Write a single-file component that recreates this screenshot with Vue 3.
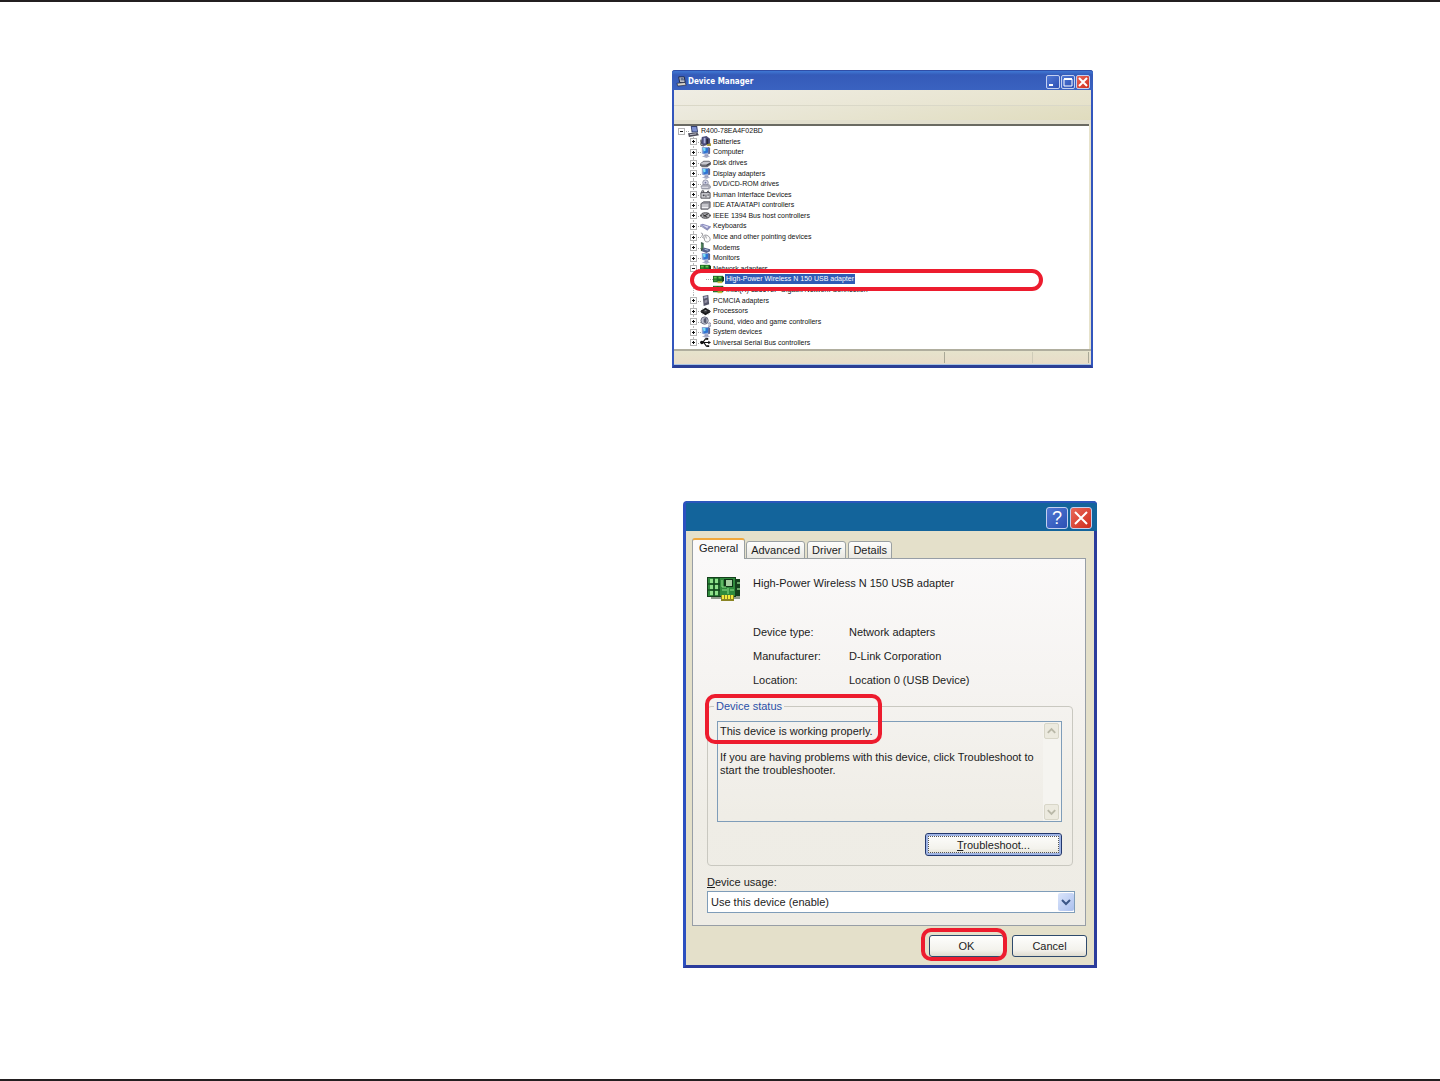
<template>
  <svg class="sprite" aria-hidden="true">
    <symbol id="icon-pc" viewBox="0 0 12 12">
      <path d="M3 0h7l1 7H4z" fill="#34406e" />
      <path d="M4 1h5l1 5H5z" fill="#7d8fd0" />
      <path d="M0 8l10-1 2 3-11 2z" fill="#4a4a58" />
      <path d="M2 9.500l7-1" stroke="#c9cbd8" />
    </symbol>
    <symbol id="icon-battery" viewBox="0 0 12 12">
      <path d="M2 1l5-1 4 3v6l-7 2-3-3z" fill="#4b4c78" />
      <path d="M4 2h2v6H4z" fill="#a9aede" />
      <path d="M7 3h2v6H7z" fill="#252438" />
      <path d="M7 9l5-1v3H8z" fill="#a79a3c" />
      <path d="M1 4v6l3 1" stroke="#333" fill="none" />
    </symbol>
    <symbol id="icon-monitor" viewBox="0 0 12 12">
      <path d="M2 0h8l1 7-7 1-2-1z" fill="#8fa6d6" />
      <path d="M3 1h6v5l-5 1z" fill="#2f74d4" />
      <path d="M3 1h3v3l-2 1z" fill="#7ce0f4" />
      <path d="M9 0l2 1v6l-2 1z" fill="#59618f" />
      <path d="M5 8h4v2H5z" fill="#8188b0" />
      <path d="M2 10l5-1 4 1-4 2z" fill="#a9aec8" />
    </symbol>
    <symbol id="icon-disk" viewBox="0 0 12 12">
      <path d="M0 6l4-3h6l2 2v2L8 10H2L0 8z" fill="#6c6c74" />
      <path d="M1 6l3-2h6l1 1-4 2H2z" fill="#c9c9d0" />
      <path d="M7 8l4-2" stroke="#34343a" />
    </symbol>
    <symbol id="icon-dvd" viewBox="0 0 12 12">
      <circle cx="6" cy="4" r="3" fill="#d6d8e6" stroke="#8d8fa4" />
      <circle cx="6" cy="4" r="1" fill="#7577a0" />
      <path d="M1 8l2-2h7l2 3-2 2H2z" fill="#a6a7b4" stroke="#77788a" stroke-width=".5" />
      <path d="M2 9h7" stroke="#efeff4" />
    </symbol>
    <symbol id="icon-hid" viewBox="0 0 12 12">
      <path d="M1 4h10v6H1z" fill="#d8d8dc" stroke="#44444c" />
      <path d="M2 4V2h2v2M7 4l2-2 1 2" stroke="#44444c" fill="none" />
      <path d="M3 6h2v2H3zM6 6h1v3H6zM8 6h2v1H8z" fill="#44444c" />
    </symbol>
    <symbol id="icon-ide" viewBox="0 0 12 12">
      <path d="M1 4l3-2h7v6l-2 2H1z" fill="#9a9aa2" stroke="#55555d" />
      <path d="M2 5h7v1H2zM2 7h7v2H2z" fill="#f0f0f3" />
    </symbol>
    <symbol id="icon-firewire" viewBox="0 0 12 12">
      <ellipse cx="6" cy="6" rx="5" ry="3" fill="#a9a9ad" stroke="#404044" />
      <path d="M3 5l5 3M4 7l5-3" stroke="#222" />
      <path d="M0 6h2M10 6h2" stroke="#555" />
    </symbol>
    <symbol id="icon-keyboard" viewBox="0 0 12 12">
      <path d="M0 4l3-1 9 3-4 4z" fill="#8d8fc0" />
      <path d="M2 4l7 2-1 2z" fill="#dcddf2" />
      <path d="M0 5l8 5 4-4" stroke="#6b6d98" stroke-width=".7" fill="none" />
    </symbol>
    <symbol id="icon-mouse" viewBox="0 0 12 12">
      <path d="M4 4c3-2 7 1 7 4s-5 4-6 1z" fill="#fbfbfb" stroke="#77777e" stroke-width=".8" />
      <path d="M1 1l2 1-1 3 2 2M6 4l1 3" stroke="#77777e" fill="none" stroke-width=".8" />
    </symbol>
    <symbol id="icon-modem" viewBox="0 0 12 12">
      <path d="M1 0l3 1v8l-3 1z" fill="#3c5c4c" />
      <path d="M4 6l7 2v2l-4 2-5-2z" fill="#55608a" />
      <path d="M5 8l4 1" stroke="#b4c8e4" />
      <path d="M2 2v5" stroke="#62a868" />
    </symbol>
    <symbol id="icon-card" viewBox="0 0 12 12">
      <path d="M0 2h11v7H0z" fill="#1d6a26" />
      <path d="M1 3h3v2H1zM6 3h3v2H6z" fill="#62c44c" />
      <path d="M1 6h3v2H1z" fill="#3c9638" />
      <path d="M10 3h2v5h-2z" fill="#17391b" />
      <path d="M5 8h5v2H5z" fill="#c7bd3c" />
    </symbol>
    <symbol id="icon-pcmcia" viewBox="0 0 12 12">
      <path d="M3 1l6-1 1 10-6 2z" fill="#55556a" />
      <path d="M4 2l4-1v2L4 4z" fill="#b0b0cc" />
      <path d="M5 6l3-1v3l-3 1z" fill="#9390a2" />
    </symbol>
    <symbol id="icon-cpu" viewBox="0 0 12 12">
      <path d="M1 5l5-3 5 3v2l-5 3-5-3z" fill="#18181a" />
      <path d="M4 5l2-1 2 1-2 2z" fill="#8c8c90" />
      <path d="M0 6h12M3 3l6 6M9 3L3 9" stroke="#3a3a3c" stroke-width=".7" />
    </symbol>
    <symbol id="icon-sound" viewBox="0 0 12 12">
      <circle cx="5" cy="5" r="4" fill="#bfc1cf" stroke="#66687c" />
      <path d="M4 3l3-1v6L4 7z" fill="#55586e" />
      <path d="M9 8a2 2 0 1 1 0 3" fill="#c9cadb" stroke="#7b7d94" />
    </symbol>
    <symbol id="icon-usb" viewBox="0 0 12 12">
      <path d="M1 6h9M3 6l3-4h2M4 6l3 4h2" stroke="#111" stroke-width="1.3" fill="none" />
      <circle cx="2" cy="6" r="2" fill="#111" />
      <path d="M9 4l3 2-3 2zM7 1h2v2H7zM8 9h2v2H8z" fill="#111" />
    </symbol>
  </svg>

  <main class="page">
    <section class="manager">
      <header class="manager-title">
        <svg class="title-icon" viewBox="0 0 12 12">
          <path d="M3 1h6l1 6H4z" fill="#c8cbd2" stroke="#1c2442" />
          <path d="M5 2h3l1 3H5z" fill="#62708c" />
          <path d="M1 8l9-1 1 3-9 1z" fill="#d8d4c8" stroke="#1c2442" stroke-width=".7" />
        </svg>
        <h1>Device Manager</h1>
        <button class="caption" aria-label="Minimize">
          <svg viewBox="0 0 12 12"><path d="M2 9h4" stroke="#fff" stroke-width="2" /></svg>
        </button>
        <button class="caption" aria-label="Maximize">
          <svg viewBox="0 0 12 12">
            <path d="M2 3h8v7H2z" stroke="#fff" fill="none" />
            <path d="M2 3h8" stroke="#fff" stroke-width="2" />
          </svg>
        </button>
        <button class="caption close" aria-label="Close">
          <svg viewBox="0 0 12 12"><path d="M2 2l8 8M10 2l-8 8" stroke="#fff" stroke-width="2" /></svg>
        </button>
      </header>
      <div class="menu-band"></div>
      <div class="tool-band"></div>
      <ul class="tree">
        <li v-for="item in devices" :key="item.name" :class="'level-' + item.level">
          <button v-if="item.level < 2" class="toggle" :class="{ open: item.open }" :aria-label="item.name"></button>
          <svg class="device-icon"><use :href="'#icon-' + item.icon" /></svg>
          <span class="label" :class="{ selected: item.selected }">{{ item.name }}</span>
          <span v-if="item.selected" class="ring ring-row"></span>
        </li>
      </ul>
      <footer class="status-bar"><span></span><span></span><span></span></footer>
    </section>

    <section class="dialog">
      <header class="dialog-title">
        <button class="caption big" aria-label="Help">?</button>
        <button class="caption big close" aria-label="Close">
          <svg viewBox="0 0 20 20"><path d="M4 4l12 12M16 4L4 16" stroke="#fff" stroke-width="2" /></svg>
        </button>
      </header>
      <div class="dialog-body">
        <nav class="tabs">
          <button
            v-for="tab in tabs"
            :key="tab"
            :class="{ active: tab === activeTab }"
            @click="activeTab = tab"
          >{{ tab }}</button>
        </nav>
        <div class="panel">
          <div class="device-head">
            <svg class="card-icon" viewBox="0 0 34 26">
              <path d="M4 5h29v19H4z" fill="#8f9a8c" />
              <path d="M0 2h29v20H0z" fill="#14401c" />
              <path d="M1 3h27v18H1z" fill="#2f8a3c" />
              <path d="M3 4h3v4H3zM8 4h3v4H8zM3 10h3v4H3zM8 10h3v4H8zM3 16h3v4H3zM8 16h3v4H8z" fill="#8ee08a" />
              <path d="M7 3v18M12 3v18M1 9h12M1 15h12" stroke="#0e3416" />
              <path d="M17 4h9v8h-9z" fill="#0e3416" />
              <path d="M19 5h6v6h-6z" fill="#a4cfa0" />
              <path d="M15 5v7h4M15 15h5M23 15h4M21 13v6" stroke="#8ee08a" fill="none" />
              <path d="M29 4h4v17h-4z" fill="#14401c" />
              <path d="M30 7h3v2h-3zM30 13h3v2h-3z" fill="#6aa868" />
              <path d="M14 20h13v6H14z" fill="#8a8424" />
              <path d="M16 20v4M19 20v4M22 20v4M25 20v4" stroke="#f2ea3c" stroke-width="2" />
            </svg>
            <span>High-Power Wireless N 150 USB adapter</span>
          </div>
          <dl class="facts">
            <template v-for="fact in facts" :key="fact.label">
              <dt>{{ fact.label }}</dt>
              <dd>{{ fact.value }}</dd>
            </template>
          </dl>
          <div class="status-group">
            <fieldset>
              <legend><label for="status">Device status</label></legend>
              <div class="status-box">
                <textarea id="status" readonly :value="statusText"></textarea>
                <div class="scroll">
                  <button disabled aria-label="Scroll up">
                    <svg viewBox="0 0 14 14"><path d="M3 9l4-4 4 4" stroke="#b9b8a8" stroke-width="2" fill="none" /></svg>
                  </button>
                  <button disabled aria-label="Scroll down">
                    <svg viewBox="0 0 14 14"><path d="M3 5l4 4 4-4" stroke="#b9b8a8" stroke-width="2" fill="none" /></svg>
                  </button>
                </div>
              </div>
              <button class="push focused"><u>T</u>roubleshoot...</button>
            </fieldset>
            <span class="ring ring-status"></span>
          </div>
          <label class="usage-label" for="usage"><u>D</u>evice usage:</label>
          <div class="usage">
            <select id="usage">
              <option>Use this device (enable)</option>
            </select>
            <svg class="drop" viewBox="0 0 16 18">
              <path d="M4 7l4 4 4-4" stroke="#3b5686" stroke-width="2" fill="none" />
            </svg>
          </div>
        </div>
        <footer class="actions">
          <span class="marked">
            <button class="push">OK</button>
            <span class="ring ring-ok"></span>
          </span>
          <button class="push">Cancel</button>
        </footer>
      </div>
    </section>
  </main>
</template>

<script setup>
import { ref } from "vue";

const devices = ref([
  { name: "R400-78EA4F02BD", icon: "pc", level: 0, open: true },
  { name: "Batteries", icon: "battery", level: 1 },
  { name: "Computer", icon: "monitor", level: 1 },
  { name: "Disk drives", icon: "disk", level: 1 },
  { name: "Display adapters", icon: "monitor", level: 1 },
  { name: "DVD/CD-ROM drives", icon: "dvd", level: 1 },
  { name: "Human Interface Devices", icon: "hid", level: 1 },
  { name: "IDE ATA/ATAPI controllers", icon: "ide", level: 1 },
  { name: "IEEE 1394 Bus host controllers", icon: "firewire", level: 1 },
  { name: "Keyboards", icon: "keyboard", level: 1 },
  { name: "Mice and other pointing devices", icon: "mouse", level: 1 },
  { name: "Modems", icon: "modem", level: 1 },
  { name: "Monitors", icon: "monitor", level: 1 },
  { name: "Network adapters", icon: "card", level: 1, open: true },
  { name: "High-Power Wireless N 150 USB adapter", icon: "card", level: 2, selected: true },
  { name: "Intel(R) 82567LF Gigabit Network Connection", icon: "card", level: 2 },
  { name: "PCMCIA adapters", icon: "pcmcia", level: 1 },
  { name: "Processors", icon: "cpu", level: 1 },
  { name: "Sound, video and game controllers", icon: "sound", level: 1 },
  { name: "System devices", icon: "monitor", level: 1 },
  { name: "Universal Serial Bus controllers", icon: "usb", level: 1 },
]);

const tabs = ["General", "Advanced", "Driver", "Details"];
const activeTab = ref("General");

const facts = [
  { label: "Device type:", value: "Network adapters" },
  { label: "Manufacturer:", value: "D-Link Corporation" },
  { label: "Location:", value: "Location 0 (USB Device)" },
];

const statusText = `This device is working properly.

If you are having problems with this device, click Troubleshoot to
start the troubleshooter.`;
</script>

<style>
body {
  background: #fff;
}
</style>

<style scoped>
* {
  box-sizing: border-box;
}

button,
select,
textarea {
  margin: 0;
  padding: 0;
  font: inherit;
  color: inherit;
}

.sprite {
  position: absolute;
  width: 0;
  height: 0;
}

.page {
  display: grid;
  grid-template-columns: 7fr 8fr;
  align-content: start;
  row-gap: 133px;
  min-height: 100vh;
  padding-top: 68px;
  border-top: 2px solid #231f20;
  border-bottom: 2px solid #231f20;
  font-family: "Liberation Sans", Arial, sans-serif;
  font-size: 11px;
  color: #1c1c1c;
}

/* Device Manager */
.manager {
  grid-column: 2;
  width: 100%;
  max-width: 421px;
  border: solid #3356bd;
  border-width: 0 2px 3px;
  border-bottom-color: #2b3f96;
  border-radius: 3px 3px 0 0;
  background: #e6e2cb;
  font-size: 7px;
}

.manager-title {
  display: flex;
  align-items: center;
  gap: 1px;
  height: 20px;
  margin: 0 -2px;
  padding: 2px 3px 0 4px;
  border-top: 1px solid #2f4ea8;
  border-radius: 3px 3px 0 0;
  background: linear-gradient(#3f78d4, #355bb9 20%, #3a62c0);
}

.title-icon {
  width: 11px;
  height: 11px;
}

h1 {
  flex: 1;
  margin: 0;
  font-family: "DejaVu Sans Condensed", "DejaVu Sans", sans-serif;
  font-size: 8px;
  font-weight: bold;
  color: #fff;
}

.caption {
  display: flex;
  align-items: center;
  justify-content: center;
  width: 14px;
  height: 14px;
  border: 1px solid #c3d0f0;
  border-radius: 2px;
  background: linear-gradient(135deg, #5078d4, #2c50b4);
  color: #fff;
}

.caption svg {
  width: 12px;
  height: 12px;
}

.caption.close {
  background: linear-gradient(135deg, #e8685a, #d02c1c);
}

.menu-band,
.tool-band {
  background: linear-gradient(170deg, #efede4, #e6e2ca);
}

.menu-band {
  height: 15px;
}

.tool-band {
  height: 19px;
  border-top: 1px solid #dad8c8;
  border-bottom: 4px solid #e2dfce;
  background: linear-gradient(170deg, #edebe0, #e0dcbe);
}

.tree {
  display: flex;
  flex-direction: column;
  height: 225px;
  margin: 0 2px 0 0;
  padding: 0 0 1px;
  border-top: 2px solid #6a6a62;
  background: #fff;
  list-style: none;
  color: #111;
}

.tree li {
  position: relative;
  display: flex;
  flex: 1;
  align-items: center;
  min-height: 0;
  padding-left: 4px;
}

.tree li.level-1 {
  padding-left: 16px;
}

.tree li.level-2 {
  padding-left: 39px;
}

/* dotted branches */
.tree li::before {
  content: "";
  position: absolute;
  top: 50%;
  left: 12px;
  width: 3px;
  border-top: 1px dotted #a5a5a5;
}

.tree li.level-1::before {
  left: 24px;
}

.tree li.level-2::before {
  left: 32px;
  width: 7px;
}

.tree li:not(.level-0)::after {
  content: "";
  position: absolute;
  top: 0;
  bottom: 0;
  left: 19px;
  border-left: 1px dotted #b5b5b5;
}

.tree li:last-child::after {
  bottom: 50%;
}

.toggle {
  position: relative;
  z-index: 1;
  width: 7px;
  height: 7px;
  margin-right: 3px;
  border: 1px solid #b4b4b4;
  background:
    linear-gradient(#111, #111) center / 3px 1px no-repeat,
    linear-gradient(#111, #111) center / 1px 3px no-repeat,
    #fff;
}

.toggle.open {
  background: linear-gradient(#111, #111) center / 3px 1px no-repeat #fff;
}

.device-icon {
  width: 11px;
  height: 11px;
  margin-right: 1px;
}

.label {
  padding: 0 1px;
  line-height: 10px;
  white-space: nowrap;
}

.label.selected {
  background: #2f5bb5;
  color: #fff;
}

.status-bar {
  display: grid;
  grid-template-columns: 1fr 88px 56px;
  height: 16px;
  padding: 1px 2px 1px 0;
  border-top: 2px solid #b0ae9e;
  border-bottom: 1px solid #a9c4e2;
  background: linear-gradient(#e6e3cc, #e8dcc8);
}

.status-bar span {
  border-right: 1px solid #a9a896;
}

.status-bar span:nth-child(2) {
  border-right-color: #cfccb8;
}

/* red marker outlines */
.ring {
  position: absolute;
  z-index: 2;
  border: 4px solid #ed1c2e;
  pointer-events: none;
}

.ring-row {
  top: -5px;
  left: 16px;
  right: 46px;
  height: 22px;
  border-radius: 11px;
}

.ring-status {
  top: -5px;
  left: -2px;
  width: 177px;
  height: 50px;
  border-radius: 10px;
}

.ring-ok {
  top: -7px;
  left: -8px;
  right: -3px;
  height: 33px;
  border-radius: 10px;
}

/* Properties dialog */
.dialog {
  grid-column: 2;
  width: 100%;
  max-width: 414px;
  margin-left: 11px;
  border: solid #2c50c0;
  border-width: 0 3px 3px;
  border-right-color: #2b3c9c;
  border-bottom-color: #2b3c9c;
  border-radius: 4px 4px 0 0;
  background: #e4e0ca;
}

.dialog-title {
  display: flex;
  align-items: center;
  justify-content: flex-end;
  gap: 2px;
  height: 30px;
  margin-right: -3px;
  padding: 2px 5px 0 0;
  border-top: 2px solid #2a57bc;
  border-radius: 0 4px 0 0;
  background: #13649b;
}

.caption.big {
  width: 22px;
  height: 22px;
  border-radius: 3px;
  font-size: 18px;
  line-height: 20px;
}

.caption.big svg {
  width: 20px;
  height: 20px;
}

.dialog-body {
  padding: 7px 7px 8px 6px;
}

.tabs {
  position: relative;
  display: flex;
  align-items: flex-end;
  gap: 2px;
  margin-bottom: -1px;
}

.tabs button {
  height: 18px;
  padding: 0 4px;
  border: 1px solid #9aa0a2;
  border-radius: 3px 3px 0 0;
  background: linear-gradient(#fdfdfc, #e9e8e2);
}

.tabs button.active {
  height: 21px;
  margin-right: -1px;
  padding: 0 6px 3px;
  border-top: 2px solid #f0a83c;
  border-bottom: 0;
  background: #faf9f9;
}

.panel {
  margin-right: 1px;
  padding: 16px 10px 12px 14px;
  border: 1px solid #979ea6;
  background: linear-gradient(#faf9f9, #f6f4f2 30%, #efede6 70%, #eeece5);
}

.device-head {
  display: flex;
  gap: 12px;
  line-height: 16px;
}

.card-icon {
  width: 34px;
  height: 26px;
}

.facts {
  display: grid;
  grid-template-columns: 96px 1fr;
  margin: 19px 0 7px;
  padding-left: 46px;
  line-height: 24px;
}

.facts dd {
  margin: 0;
}

.status-group {
  position: relative;
  margin-right: 2px;
}

fieldset {
  display: flex;
  flex-direction: column;
  min-width: 0;
  margin: 0;
  padding: 0 10px 9px 6px;
  border: 1px solid #c9c8c0;
  border-radius: 4px;
}

legend {
  padding: 0 2px;
  line-height: 14px;
  color: #2a50a8;
}

.status-box {
  display: flex;
  height: 101px;
  margin: 8px 0 11px 3px;
  border: 1px solid #7f9db9;
}

textarea {
  flex: 1;
  min-width: 0;
  padding: 3px 0 0 2px;
  border: 0;
  outline: 0;
  resize: none;
  overflow: hidden;
  background: transparent;
  line-height: 13px;
}

.scroll {
  display: flex;
  flex-direction: column;
  justify-content: space-between;
  width: 18px;
  padding: 1px 2px 1px 1px;
  background: #f5f4f0;
}

.scroll button {
  height: 16px;
  border: 1px solid #d8d6c8;
  border-radius: 2px;
  background: #eceadf;
}

.scroll svg {
  display: block;
  width: 13px;
  height: 14px;
}

.push {
  width: 75px;
  height: 22px;
  border: 1px solid #2e4a6c;
  border-radius: 3px;
  background: linear-gradient(#fefefd, #f3f2ec 70%, #dedccf);
}

.push.focused {
  align-self: flex-end;
  width: 137px;
  height: 23px;
  border-color: #23386e;
  box-shadow: inset 0 0 0 2px #9fb4e4;
  outline: 1px dotted #555;
  outline-offset: -4px;
}

.usage-label {
  display: block;
  margin: 9px 0 2px;
  line-height: 14px;
}

.usage {
  position: relative;
}

select {
  display: block;
  width: 100%;
  height: 22px;
  padding: 0 20px 0 3px;
  border: 1px solid #7f9db9;
  border-radius: 0;
  background: #fff;
  appearance: none;
}

.drop {
  position: absolute;
  top: 2px;
  right: 1px;
  width: 16px;
  height: 18px;
  border-radius: 2px;
  background: linear-gradient(135deg, #dbe5fb, #aabfee);
  pointer-events: none;
}

.actions {
  display: flex;
  justify-content: flex-end;
  gap: 8px;
  margin-top: 9px;
}

.marked {
  position: relative;
  display: flex;
}
</style>
